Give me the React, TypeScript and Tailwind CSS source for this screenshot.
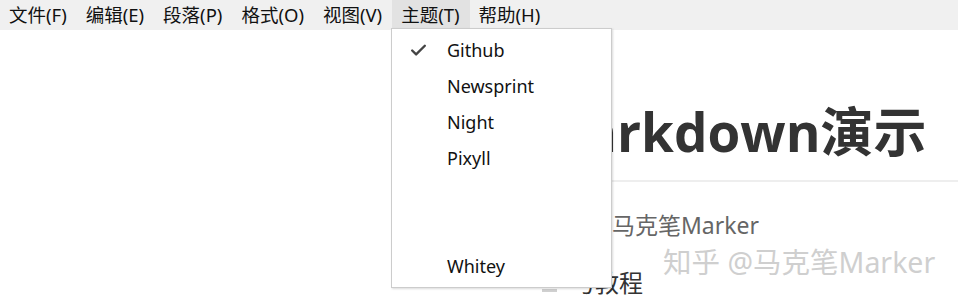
import { Check } from "lucide-react"

const menus = ["文件(F)", "编辑(E)", "段落(P)", "格式(O)", "视图(V)", "主题(T)", "帮助(H)"]
const themes = ["Github", "Newsprint", "Night", "Pixyll", "", "", "Whitey"]

export default function App() {
  return (
    <div className="relative h-[301px] w-[958px] overflow-hidden bg-white font-['Noto_Sans','Noto_Sans_CJK_SC',sans-serif]">
      {/* menu bar */}
      <div className="flex h-[30px] bg-[#f0f0f0] text-[18.5px] leading-none text-[#111]">
        {menus.map(m => (
          <div
            key={m}
            className={`flex h-full items-center pl-[9px] pr-[10px] ${m === "主题(T)" ? "bg-[#e2e2e2]" : ""}`}
          >
            {m}
          </div>
        ))}
      </div>

      {/* document behind */}
      <div className="pl-[535px] pt-[66px] text-[#333]">
        <h1 className="font-['Open_Sans','Noto_Sans_CJK_SC',sans-serif] text-[53px] font-bold leading-[72px] text-[#333]">
          Markdown演示
        </h1>
        <div className="mt-[12px] h-[2px] bg-[#eeeeee]" />
        <p className="mt-[28px] pl-[8px] text-[23px] leading-[30px] text-[#666]">作者：马克笔Marker</p>
        <div className="ml-[7px] mt-[28px] flex items-end gap-[14px]">
          <span className="mb-[6px] h-[3px] w-[15px] bg-[#d0d0d0]" />
          <span className="text-[24px] leading-[30px] text-[#333]">与教程</span>
        </div>
      </div>

      {/* watermark */}
      <div className="absolute left-[663px] top-[243px] text-[28.5px] leading-[38px] text-[#cfcfcf] [text-shadow:0_0_2px_#ffffff]">
        知乎 @马克笔Marker
      </div>

      {/* dropdown */}
      <div className="absolute left-[391px] top-[28px] w-[221px] border border-[#cccccc] bg-white pt-[3px] pb-[3px] shadow-[1px_1px_2px_rgba(0,0,0,0.15)]">
        {themes.map((t, i) => (
          <div key={i} className="flex h-[36px] items-center text-[18px] text-[#111]">
            <div className="flex w-[55px] justify-center pr-[2px]">
              {i === 0 && <Check className="h-[19px] w-[19px] text-[#444]" strokeWidth={3} />}
              {i === 5 && <span className="ml-[234px] mt-[2px] h-[1px] w-[1px] bg-[#999]" />}
            </div>
            {t}
          </div>
        ))}
      </div>
    </div>
  )
}
